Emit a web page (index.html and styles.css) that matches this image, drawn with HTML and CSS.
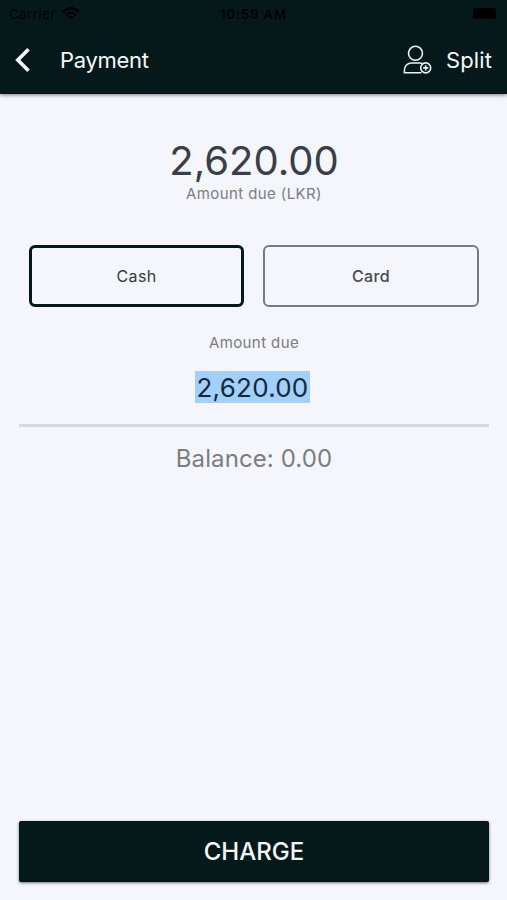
FILE: index.html
```html
<!DOCTYPE html>
<html lang="en">
<head>
<meta charset="utf-8">
<title>Payment</title>
<link rel="stylesheet" href="styles.css">
</head>
<body>
<div class="screen">
  <header class="header">
    <div class="status">
      <div class="carrier"><span>Carrier</span>
        <svg width="18" height="13" viewBox="0 0 18 13" fill="none" stroke="#000" stroke-width="2.5"><path d="M1 4.8Q9-2 17 4.8M4 8Q9 3.6 14 8"/><path d="M6.3 10Q9 7.6 11.7 10L9 13Z" fill="#000" stroke="none"/></svg>
      </div>
      <span class="time">10:59 AM</span>
      <div class="battery-wrap"><i class="battery"></i></div>
    </div>
    <nav class="nav">
      <svg class="back" width="16" height="26" viewBox="0 0 16 26" fill="none" stroke="#f4f9f9" stroke-width="3.6"><path d="M13.5 2.2 2.8 13 13.5 23.8"/></svg>
      <h1 class="title">Payment</h1>
      <button class="split">
        <svg width="30" height="30" viewBox="0 0 30 30" fill="none" stroke="#e9f2f2" stroke-width="1.6"><circle cx="12.5" cy="8.3" r="7"/><path d="M18.4 27.8H1.4V25.5C1.4 20.8 4.6 18 8.5 18H16.5Q18.5 18 20 18.7"/><circle cx="22.7" cy="22.9" r="5"/><path d="M22.7 20.3v5.2M20.1 22.9h5.2"/></svg>
        <span>Split</span>
      </button>
    </nav>
  </header>
  <main class="content">
    <div class="total">2,620.00</div>
    <div class="caption">Amount due (LKR)</div>
    <div class="methods">
      <button class="method selected">Cash</button>
      <button class="method">Card</button>
    </div>
    <div class="label">Amount due</div>
    <div class="field"><span class="value">2,620.00</span></div>
    <div class="balance">Balance: 0.00</div>
    <button class="charge">CHARGE</button>
  </main>
</div>
</body>
</html>
```
FILE: styles.css
```css
* { box-sizing: border-box; }
body { margin: 0; font-family: Inter, "Liberation Sans", sans-serif; background: #f4f6fb; }
button { font: inherit; border: 0; padding: 0; background: none; }
.screen { height: 900px; display: flex; flex-direction: column; }
.header { height: 94px; flex: none; background: #05191b; box-shadow: 0 1px 4px rgba(0, 0, 0, .5); }
.status { height: 27px; padding: 0 11px 0 9px; display: grid; grid-template-columns: 1fr auto 1fr; align-items: center; font-size: 13px; color: #000; }
.carrier { display: flex; align-items: center; gap: 6px; letter-spacing: .6px; }
.time { font-weight: 600; letter-spacing: .9px; margin-left: 2px; }
.battery-wrap { display: flex; justify-content: flex-end; }
.battery { width: 23px; height: 11px; border-radius: 3px; background: #000; }
.nav { height: 65px; padding: 0 15px; display: flex; align-items: center; color: #f4f9f9; }
.back { margin-top: 1px; }
.title { margin: 0 auto 0 29px; font-size: 22px; line-height: 28px; font-weight: 400; letter-spacing: -.3px; }
.split { display: flex; align-items: center; gap: 13px; color: inherit; font-size: 22px; line-height: 28px; letter-spacing: .1px; }
.content { flex: 1; padding: 43px 18px 18px 19px; display: flex; flex-direction: column; text-align: center; }
.total { height: 48px; font-size: 40px; line-height: 48px; color: #393e49; }
.caption { height: 18px; font-size: 15px; line-height: 18px; letter-spacing: .4px; color: #7b7d81; }
.methods { display: grid; grid-template-columns: 215px 1fr; gap: 19px; margin: 42px 10px 0; }
.method { height: 62px; border: 2px solid #77797c; border-radius: 6px; font-size: 16px; letter-spacing: .4px; color: #45494d; font-weight: 500; }
.method.selected { border: 3px solid #05191b; font-weight: 400; color: #343a3e; }
.label { margin-top: 27px; font-size: 15px; line-height: 18px; letter-spacing: .4px; color: #7b7d81; }
.field { height: 75px; padding-top: 19px; margin-bottom: 15px; border-bottom: 3px solid #d7d9de; }
.value { display: inline-block; height: 32px; line-height: 33px; padding: 0 1px; margin-right: 3px; font-size: 26px; letter-spacing: .25px; color: #13283a; background: #a2d0fa; }
.balance { font-size: 24px; line-height: 33px; letter-spacing: .1px; color: #7b7d81; }
.charge { margin-top: auto; height: 61px; border-radius: 2px; background: #05191b; color: #f4f9f9; font-size: 24px; font-weight: 500; box-shadow: 0 1px 3px rgba(0, 0, 0, .55); }
```
